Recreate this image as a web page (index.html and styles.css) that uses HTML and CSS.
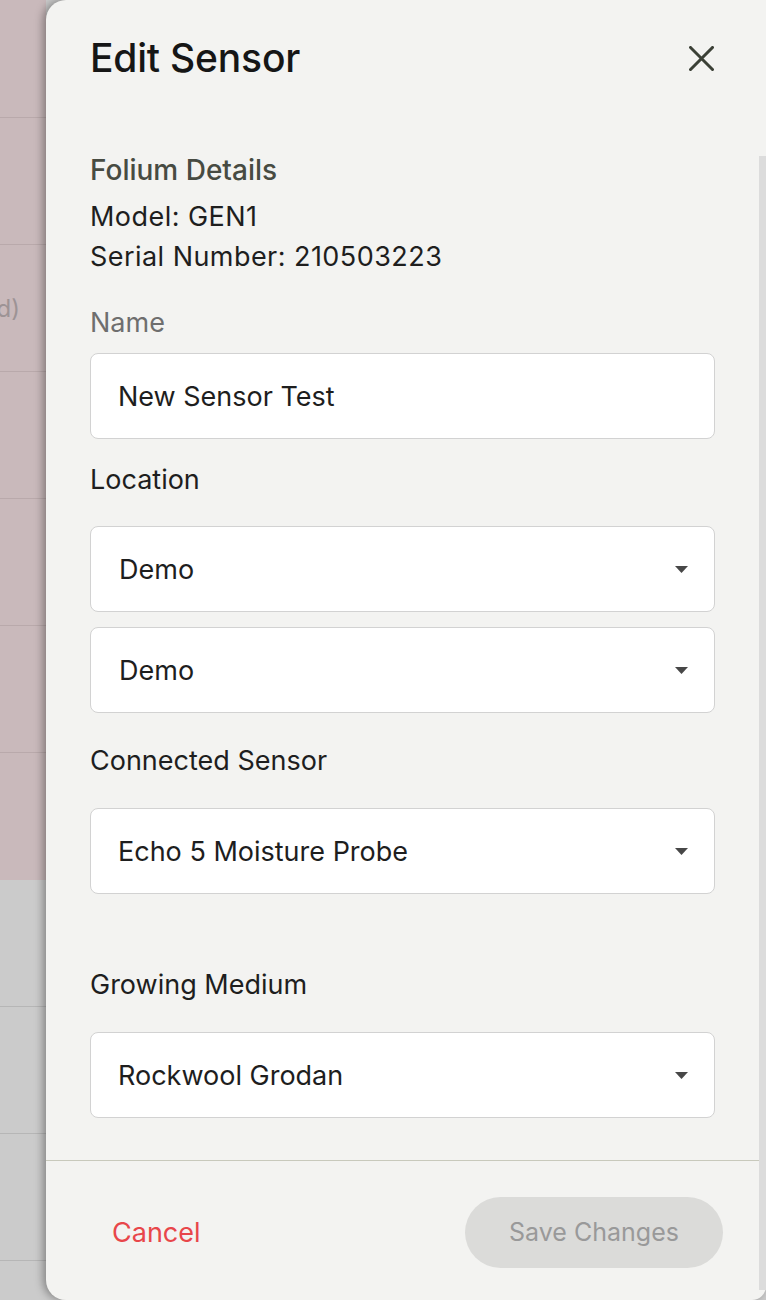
FILE: index.html
```html
<!DOCTYPE html>
<html lang="en">
    <head>
        <meta charset="UTF-8">
        <title>Edit Sensor</title>
        <link rel="stylesheet" href="styles.css">
    </head>
    <body>
        <div class="screen">
            <aside class="backdrop">
                <div class="row row-first"></div>
                <div class="row"></div>
                <div class="row"><span class="row-text">(Disconnected)</span></div>
                <div class="row"></div>
                <div class="row"></div>
                <div class="row"></div>
                <div class="row row-last"></div>
                <div class="row row-grey"></div>
                <div class="row row-grey"></div>
                <div class="row row-grey"></div>
                <div class="row row-grey"></div>
            </aside>
            <section class="drawer">
                <header class="drawer-head">
                    <h1>Edit Sensor</h1>
                    <button class="close" type="button" aria-label="Close">
                        <svg width="25" height="25" viewBox="0 0 25 25">
                            <path d="M1.5 1.5 L23.5 23.5 M23.5 1.5 L1.5 23.5" stroke="#3b4036" stroke-width="3" stroke-linecap="square" fill="none"/>
                        </svg>
                    </button>
                </header>
                <div class="drawer-body">
                    <h2 class="details-title">Folium Details</h2>
                    <p class="detail">Model: GEN1</p>
                    <p class="detail">Serial Number: 210503223</p>

                    <label class="field-label label-name" for="name">Name</label>
                    <div class="field" id="name">New Sensor Test</div>

                    <label class="field-label label-location">Location</label>
                    <div class="field select">
                        <span class="select-value">Demo</span>
                        <svg class="caret" width="13" height="7" viewBox="0 0 13 7"><polygon points="0,0 13,0 6.5,7" fill="#474747"/></svg>
                    </div>
                    <div class="field select select-stacked">
                        <span class="select-value">Demo</span>
                        <svg class="caret" width="13" height="7" viewBox="0 0 13 7"><polygon points="0,0 13,0 6.5,7" fill="#474747"/></svg>
                    </div>

                    <label class="field-label label-connected">Connected Sensor</label>
                    <div class="field select">
                        <span>Echo 5 Moisture Probe</span>
                        <svg class="caret" width="13" height="7" viewBox="0 0 13 7"><polygon points="0,0 13,0 6.5,7" fill="#474747"/></svg>
                    </div>

                    <label class="field-label label-medium">Growing Medium</label>
                    <div class="field select">
                        <span>Rockwool Grodan</span>
                        <svg class="caret" width="13" height="7" viewBox="0 0 13 7"><polygon points="0,0 13,0 6.5,7" fill="#474747"/></svg>
                    </div>
                </div>
                <footer class="drawer-foot">
                    <button class="cancel" type="button">Cancel</button>
                    <button class="save" type="button" disabled>Save Changes</button>
                </footer>
                <div class="scroll-track"></div>
            </section>
        </div>
    </body>
</html>
```

FILE: styles.css
```css
* {
    box-sizing: border-box;
}
body {
    margin: 0;
    overflow: hidden;
    font-family: Inter, "Noto Sans", sans-serif;
    color: #1e1e1e;
    background-color: #cbcbcb;
}
button {
    font-family: inherit;
    border: none;
    background: none;
    padding: 0;
}
.screen {
    display: flex;
    height: 1300px;
}

/* page underneath the drawer */
.backdrop {
    width: 46px;
    flex-shrink: 0;
    overflow: hidden;
}
.row {
    height: 127px;
    background-color: #c9b9bb;
    border-bottom: 1px solid #b9a9ab;
    display: flex;
    align-items: center;
    justify-content: flex-end;
    padding-right: 26px;
}
.row-first {
    height: 118px;
}
.row-last {
    border-bottom-color: #c9b9bb;
}
.row-grey {
    background-color: #cbcbcb;
    border-bottom-color: #b6b6b6;
}
.row-text {
    white-space: nowrap;
    font-size: 24px;
    color: #9d9395;
}

/* drawer */
.drawer {
    flex: 1;
    position: relative;
    display: flex;
    flex-direction: column;
    background-color: #f3f3f1;
    border-radius: 20px 0 14px 20px;
    box-shadow: -3px 0 9px rgba(0, 0, 0, 0.35);
}
.drawer-head {
    display: flex;
    justify-content: space-between;
    align-items: center;
    padding: 34px 52px 0 44px;
}
.drawer-head h1 {
    margin: 0;
    font-size: 39px;
    line-height: 48px;
    font-weight: 500;
    letter-spacing: -0.2px;
    color: #161616;
}
.close {
    width: 25px;
    height: 25px;
    display: block;
}
.close svg {
    display: block;
}
.drawer-body {
    flex: 1;
    padding: 71px 51px 0 44px;
}
.details-title {
    margin: 0 0 10px;
    font-size: 28px;
    line-height: 34px;
    font-weight: 500;
    color: #474b42;
}
.detail {
    margin: 0;
    font-size: 27px;
    line-height: 40px;
    letter-spacing: 0.45px;
}
.field-label {
    display: block;
    font-size: 27px;
    line-height: 32px;
    margin-bottom: 31px;
}
.label-name {
    margin-top: 30px;
    margin-bottom: 14px;
    color: #6e6e6e;
}
.label-location {
    margin-top: 25px;
    margin-bottom: 30px;
}
.label-connected {
    margin-top: 32px;
}
.label-medium {
    margin-top: 75px;
}
.field {
    height: 86px;
    display: flex;
    align-items: center;
    justify-content: space-between;
    padding: 0 26px 0 27px;
    background-color: #fff;
    border: 1px solid #d2d2d2;
    border-radius: 8px;
    font-size: 27px;
}
.select-value {
    padding-left: 1px;
}
.select-stacked {
    margin-top: 15px;
}
.caret {
    display: block;
}

/* footer with actions */
.drawer-foot {
    height: 140px;
    display: flex;
    justify-content: space-between;
    align-items: center;
    padding: 3px 43px 0 66px;
    border-top: 1px solid #c8c9bc;
}
.cancel {
    font-size: 27px;
    color: #e8464a;
}
.save {
    width: 258px;
    height: 71px;
    border-radius: 36px;
    background-color: #dbdbd9;
    color: #999;
    font-size: 25px;
}
.scroll-track {
    position: absolute;
    top: 156px;
    right: 0;
    bottom: 10px;
    width: 7px;
    background-color: #dcdcdc;
}
```
